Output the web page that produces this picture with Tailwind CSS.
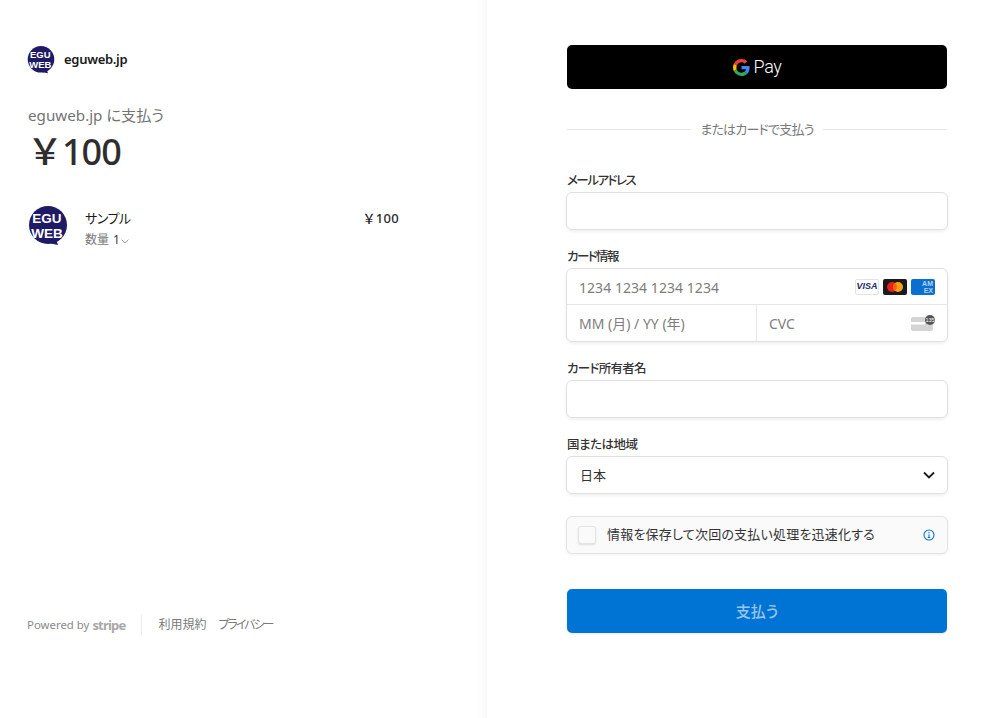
<!DOCTYPE html>
<html lang="ja">
<head>
    <meta charset="UTF-8">
    <meta name="viewport" content="width=device-width, initial-scale=1.0">
    <script src="https://cdn.jsdelivr.net/npm/@tailwindcss/browser@4"></script>
    <title>eguweb.jp</title>
</head>
<body class="font-['Noto_Sans','Noto_Sans_CJK_JP',sans-serif] bg-white overflow-hidden [font-feature-settings:'palt']">
    <div class="flex h-[718px]">
        <!-- Left: summary -->
        <aside class="w-[487px] shrink-0 flex flex-col pt-[45px] pl-[27px] pr-[88px] shadow-[inset_-14px_0_14px_-14px_rgba(0,0,0,0.05)]">
            <div class="flex items-center gap-[9px] h-[29px]">
                <svg class="w-7 h-7" viewBox="0 0 40 40">
                    <circle cx="20" cy="19" r="19" fill="#1f1a66"/>
                    <path d="M16 36l14 3-3-9z" fill="#1f1a66"/>
                    <text x="19" y="16.500" text-anchor="middle" font-size="13.500" font-weight="700" fill="#fff" font-family="Liberation Sans">EGU</text>
                    <text x="19" y="32" text-anchor="middle" font-size="13.500" font-weight="700" fill="#fff" font-family="Liberation Sans">WEB</text>
                </svg>
                <span class="text-[13px] font-semibold text-[#1a1a1a] tracking-[-0.3px]">eguweb.jp</span>
            </div>

            <p class="mt-[30px] ml-px text-[15.2px] leading-[22px] font-normal text-[#737373]">eguweb.jp に支払う</p>
            <p class="mt-[4px] text-[36px] leading-[44px] font-medium text-[#2e2e2e] tracking-[-1px] [font-feature-settings:normal]">&#xFFE5;100</p>

            <div class="mt-[32px] flex items-start">
                <svg class="w-10 h-10 ml-px" viewBox="0 0 40 40">
                    <circle cx="20" cy="19" r="19" fill="#1f1a66"/>
                    <path d="M16 36l14 3-3-9z" fill="#1f1a66"/>
                    <text x="19" y="16.500" text-anchor="middle" font-size="13.500" font-weight="700" fill="#fff" font-family="Liberation Sans">EGU</text>
                    <text x="19" y="32" text-anchor="middle" font-size="13.500" font-weight="700" fill="#fff" font-family="Liberation Sans">WEB</text>
                </svg>
                <div class="ml-[17px] flex-1 pt-[1px]">
                    <div class="text-[13px] leading-[20px] font-normal text-[#1a1a1a] tracking-[-0.5px] pt-px">サンプル</div>
                    <div class="mt-[2px] flex items-center text-[12px] leading-[20px] text-[#7a7a7a]">
                        数量 <span class="ml-1 text-[#3c3c3c]">1</span>
                        <svg class="w-2 h-2 ml-px mt-px text-[#8a8a8a]" fill="none" viewBox="0 0 12 12" stroke="currentColor" stroke-width="1.3">
                            <path d="M1 4l5 5 5-5" />
                        </svg>
                    </div>
                </div>
                <div class="pt-[2px] text-[13px] leading-[20px] font-medium text-[#2a2a2a] tracking-[0.3px] [font-feature-settings:normal]">&#xFFE5;100</div>
            </div>

            <footer class="mt-auto mb-[83px] flex items-center text-[12px] leading-[20px] text-[#8a8a8a]">
                <span class="text-[11.400px]">Powered by</span>
                <span class="ml-[3px] text-[13px] font-bold text-[#a8a8a8] tracking-[-0.8px]">stripe</span>
                <span class="ml-4 w-px h-5 bg-[#ececec]"></span>
                <a class="ml-4 text-[#7a7a7a]">利用規約</a>
                <a class="ml-3 text-[#7a7a7a] tracking-[-2px]">プライバシー</a>
            </footer>
        </aside>

        <!-- Right: payment form -->
        <main class="w-[380px] ml-[80px] pt-[45px]">
            <button class="w-full h-11 bg-black rounded-[5px] flex items-center justify-center gap-[4px]">
                <svg class="w-[17px] h-[17px]" viewBox="0 0 48 48">
                    <path fill="#EA4335" d="M24 9.5c3.5 0 6.7 1.2 9.2 3.6l6.9-6.9C35.9 2.4 30.5 0 24 0 14.6 0 6.5 5.4 2.6 13.2l8 6.2C12.5 13.7 17.8 9.5 24 9.5z"/>
                    <path fill="#4285F4" d="M47 24.5c0-1.6-.2-3.100-.4-4.500H24v9h12.900c-.6 3-2.200 5.500-4.800 7.200l7.700 6c4.500-4.200 7.200-10.400 7.200-17.700z"/>
                    <path fill="#FBBC05" d="M10.500 28.600c-.5-1.400-.8-3-.8-4.600s.3-3.200.8-4.600l-8-6.200C.9 16.500 0 20.100 0 24s.9 7.500 2.600 10.800l7.900-6.200z"/>
                    <path fill="#34A853" d="M24 48c6.500 0 11.900-2.100 15.900-5.800l-7.700-6c-2.100 1.400-4.900 2.300-8.200 2.300-6.200 0-11.500-4.200-13.400-9.900l-8 6.200C6.500 42.600 14.600 48 24 48z"/>
                </svg>
                <span class="text-white text-[18px] leading-none font-['Roboto'] font-light tracking-[-0.4px] pb-px">Pay</span>
            </button>

            <div class="mt-[30px] h-5 flex items-center gap-[9px]">
                <span class="flex-1 h-px bg-[#e6e6e6]"></span>
                <span class="text-[13px] text-[#7a7a7a] tracking-[-0.8px] pt-px">またはカードで支払う</span>
                <span class="flex-1 h-px bg-[#e6e6e6]"></span>
            </div>

            <label class="mt-[33px] block h-5 text-[12.5px] leading-[18px] font-medium text-[#333] tracking-[-1.5px]">メールアドレス</label>
            <div class="-mx-px h-[38px] rounded-md border border-[#e0e0e0] shadow-[0_2px_3px_rgba(0,0,0,0.06)]"></div>

            <label class="mt-[18px] block h-5 text-[12.5px] leading-[18px] font-medium text-[#333] tracking-[-1.6px]">カード情報</label>
            <div class="-mx-px h-[74px] rounded-md border border-[#e0e0e0] shadow-[0_2px_3px_rgba(0,0,0,0.06)] flex flex-col">
                <div class="h-9 flex items-center justify-between pl-3 pr-3 border-b border-[#e6e6e6]">
                    <span class="text-[14px] text-[#7d7d7d] pt-px tracking-[0.05px]">1234 1234 1234 1234</span>
                    <div class="flex gap-1">
                        <div class="w-6 h-4 rounded-[2px] bg-white border border-[#e4e4e8] flex items-center justify-center text-[9px] font-bold italic text-[#1a2a6c] font-['Liberation_Sans']">VISA</div>
                        <svg class="w-6 h-4" viewBox="0 0 24 16">
                            <rect width="24" height="16" rx="2" fill="#1a1a1a"/>
                            <circle cx="9" cy="8" r="5" fill="#e8201c"/>
                            <circle cx="15" cy="8" r="5" fill="#f79e1b"/>
                            <path d="M12 4a5 5 0 0 1 0 8 5 5 0 0 1 0-8z" fill="#ff5f00"/>
                        </svg>
                        <div class="w-6 h-4 rounded-[2px] bg-[#0a6fd1] flex flex-col items-end justify-center pr-[2px] text-[7px] leading-[7px] font-bold text-white/70 font-['Liberation_Sans']">
                            <span>AM</span>
                            <span>EX</span>
                        </div>
                    </div>
                </div>
                <div class="flex-1 flex">
                    <div class="w-[190px] flex items-center pl-3 border-r border-[#e6e6e6]">
                        <span class="text-[14px] text-[#7d7d7d]">MM (月) / YY (年)</span>
                    </div>
                    <div class="flex-1 flex items-center justify-between pl-3 pr-3">
                        <span class="text-[14px] text-[#7d7d7d]">CVC</span>
                        <svg class="w-6 h-4" viewBox="0 0 24 16">
                            <rect y="2" width="22" height="14" rx="2" fill="#d4d4d4"/>
                            <rect y="7" width="14" height="2.500" fill="#fff"/>
                            <circle cx="19" cy="5" r="5" fill="#555"/>
                            <text x="19" y="7" text-anchor="middle" font-size="5.500" fill="#fff" font-family="Liberation Sans">135</text>
                        </svg>
                    </div>
                </div>
            </div>

            <label class="mt-[18px] block h-5 text-[12.5px] leading-[18px] font-medium text-[#333] tracking-[-0.7px]">カード所有者名</label>
            <div class="-mx-px h-[38px] rounded-md border border-[#e0e0e0] shadow-[0_2px_3px_rgba(0,0,0,0.06)]"></div>

            <label class="mt-[18px] block h-5 text-[12.5px] leading-[18px] font-medium text-[#333] tracking-[-0.5px]">国または地域</label>
            <div class="-mx-px h-[38px] rounded-md border border-[#e0e0e0] shadow-[0_2px_3px_rgba(0,0,0,0.06)] flex items-center justify-between pl-[13px] pr-3">
                <span class="text-[13px] text-[#333] pt-px">日本</span>
                <svg class="w-3 h-3 text-[#1a1a1a]" fill="none" viewBox="0 0 12 12" stroke="currentColor" stroke-width="1.800">
                    <path d="M1 3.500l5 5 5-5" />
                </svg>
            </div>

            <div class="-mx-px mt-[22px] h-[38px] rounded-md border border-[#e4e4e4] bg-[#fafafa] shadow-[0_1px_3px_rgba(0,0,0,0.06)] flex items-center pl-[11px] pr-3">
                <span class="w-[18px] h-[18px] rounded-[3px] border border-[#e4e4e4] bg-[#fafafa] shadow-[0_1px_2px_rgba(0,0,0,0.12)]"></span>
                <span class="ml-[11px] flex-1 text-[13px] text-[#333] tracking-[0.2px]">情報を保存して次回の支払い処理を迅速化する</span>
                <svg class="w-3 h-3 text-[#0a74d4]" fill="none" viewBox="0 0 12 12" stroke="currentColor">
                    <circle cx="6" cy="6" r="5" stroke-width="1.100"/>
                    <path d="M6 5.300v3M4.800 8.500h2.400M6 3v1.200" stroke-width="1.100"/>
                </svg>
            </div>

            <button class="mt-[35px] w-full h-11 rounded-[5px] bg-[#0074d4] shadow-[0_1px_3px_rgba(0,0,0,0.1)] text-[15px] font-medium text-white/60">支払う</button>
        </main>
    </div>
</body>
</html>
